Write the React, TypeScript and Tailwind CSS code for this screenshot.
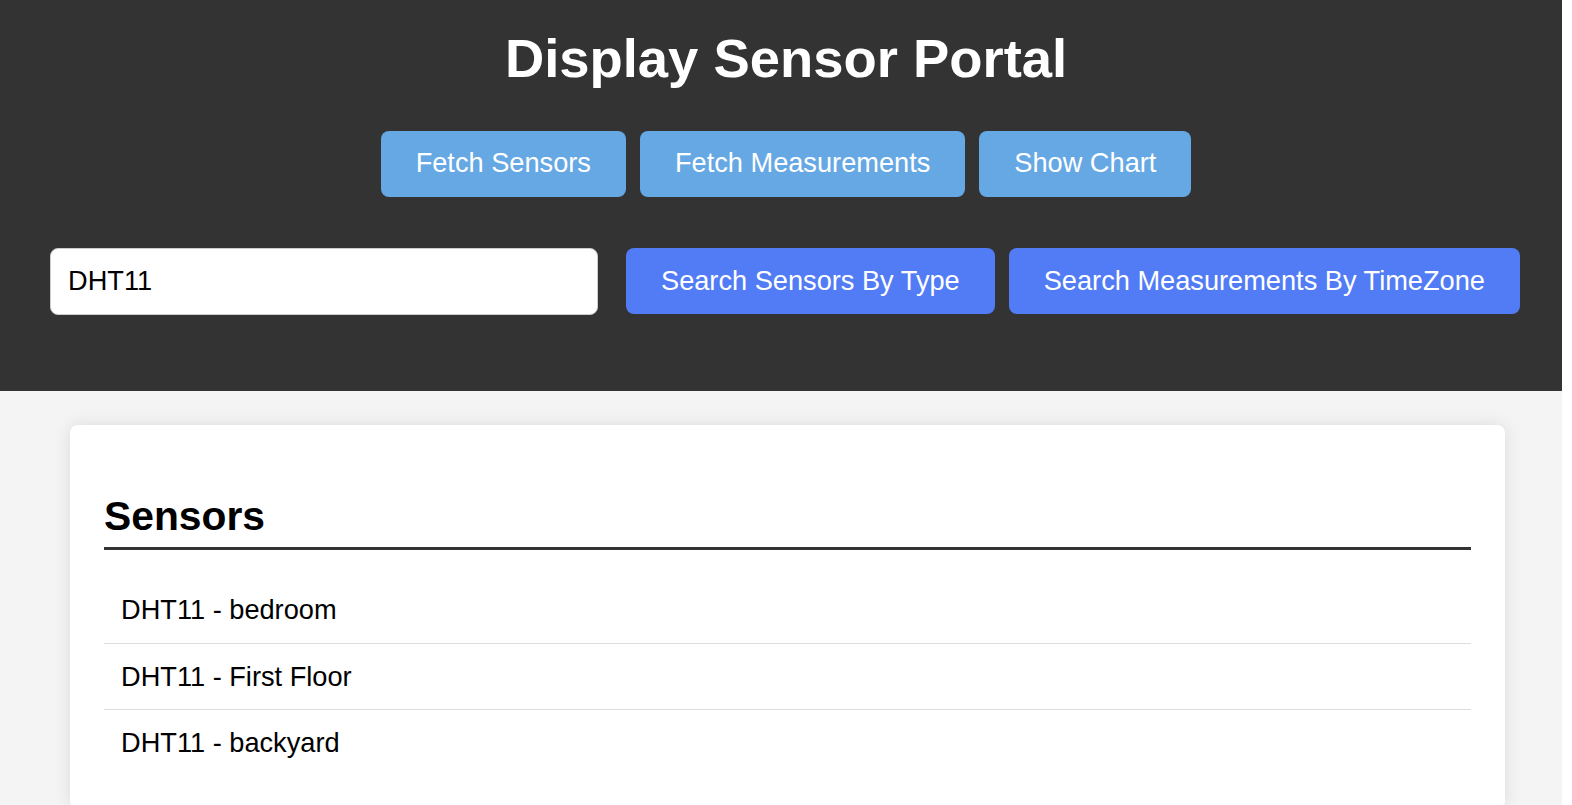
const sensors = ['DHT11 - bedroom', 'DHT11 - First Floor', 'DHT11 - backyard'];

export default function App() {
  return (
    <div className="min-h-screen bg-[#f4f4f4] font-['Liberation_Sans',Arial,sans-serif] text-[27px]">
      <header className="bg-[#333333] pt-[28px] pb-[76px] text-white">
        <h1 className="text-center text-[54.4px] font-bold leading-[1.15]">Display Sensor Portal</h1>

        <div className="mt-[40px] flex justify-center gap-[14px]">
          <button className="h-[66px] whitespace-nowrap rounded-[8px] bg-[#66a8e4] px-[35px] text-[27.2px] text-white">Fetch Sensors</button>
          <button className="h-[66px] whitespace-nowrap rounded-[8px] bg-[#66a8e4] px-[35px] text-[27.2px] text-white">Fetch Measurements</button>
          <button className="h-[66px] whitespace-nowrap rounded-[8px] bg-[#66a8e4] px-[35px] text-[27.2px] text-white">Show Chart</button>
        </div>

        <div className="mt-[51px] flex items-center gap-[14px] px-[50px]">
          <input
            defaultValue="DHT11"
            className="mr-[14px] h-[67px] w-[548px] shrink-0 rounded-[8px] border border-[#cccccc] bg-white px-[17px] text-[27.2px] text-black outline-none"
          />
          <button className="h-[66px] shrink-0 whitespace-nowrap rounded-[8px] bg-[#527cf5] px-[35px] text-[27.2px] text-white">Search Sensors By Type</button>
          <button className="h-[66px] shrink-0 whitespace-nowrap rounded-[8px] bg-[#527cf5] px-[35px] text-[27.2px] text-white">Search Measurements By TimeZone</button>
        </div>
      </header>

      <main className="pl-[70px] pr-[67px] pt-[34px]">
        <section className="rounded-[8px] bg-white px-[34px] pt-[68px] pb-[34px] shadow-[0_0_17px_rgba(0,0,0,0.1)]">
          <h2 className="border-b-[3px] border-[#333333] pb-[8px] text-[40.8px] font-bold leading-[1.15] text-black">Sensors</h2>
          <ul className="mt-[27px]">
            {sensors.map((s) => (
              <li key={s} className="border-b border-[#dddddd] p-[17px] text-[27.2px] leading-[1.15] text-black last:border-b-0">
                {s}
              </li>
            ))}
          </ul>
        </section>
      </main>

      {/* blank scrollbar strip on the right edge */}
      <div className="fixed top-0 right-0 h-screen w-[10px] bg-white" />
    </div>
  );
}
